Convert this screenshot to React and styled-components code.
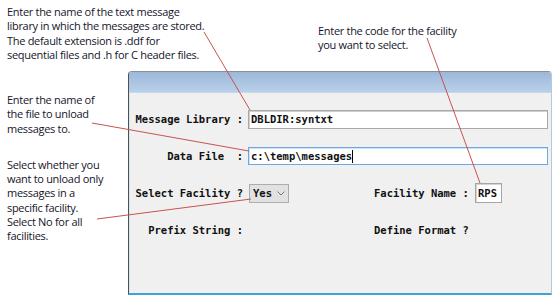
import React from 'react';
import styled, { createGlobalStyle } from 'styled-components';

const GlobalStyle = createGlobalStyle`
  html, body {
    margin: 0;
    padding: 0;
    background: #ffffff;
  }
`;

const Page = styled.div`
  position: relative;
  width: 553px;
  height: 297px;
  overflow: hidden;
  font-family: "Open Sans", "DejaVu Sans", sans-serif;
`;

const TopRow = styled.div`
  display: grid;
  grid-template-columns: 311px 1fr;
  height: 71px;
  padding-left: 7px;
  box-sizing: border-box;
`;

const MainRow = styled.div`
  display: flex;
  align-items: flex-start;
`;

const SideColumn = styled.div`
  width: 128px;
  flex-shrink: 0;
  padding-left: 7px;
  box-sizing: border-box;
  display: flex;
  flex-direction: column;
`;

const Note = styled.div`
  font-size: 11px;
  line-height: 14.3px;
  color: #15152a;
  letter-spacing: -0.3px;
  margin-top: ${p => p.$top || 0}px;
  white-space: nowrap;
`;

const Window = styled.div`
  width: 424px;
  height: 224px;
  box-sizing: border-box;
  display: flex;
  flex-direction: column;
  background: #f0f0f0;
  border-top: 1px solid #8a8f96;
  border-left: 1px solid #505050;
  border-right: 1px solid #b3c9de;
  border-bottom: 2px solid #3aa6d4;
  border-radius: 4px 4px 0 0;
  box-shadow: inset 1px 0 0 #d6e6f2;
  overflow: hidden;
`;

const TitleBar = styled.div`
  height: 20px;
  flex-shrink: 0;
  background: linear-gradient(#9cb8d9, #b9d0ea);
  border-bottom: 1px solid #c9d8e6;
`;

const Form = styled.div`
  display: grid;
  grid-template-columns: 115px 130px 101px 1fr;
  grid-auto-rows: 20px;
  row-gap: 17px;
  align-items: center;
  padding: 16px 3px 0 0;
  font-family: "DejaVu Sans Mono", "Liberation Mono", monospace;
  font-weight: bold;
  font-size: 10.5px;
  color: #111111;
`;

const Label = styled.div`
  white-space: pre;
  text-align: ${p => (p.$left ? 'left' : 'right')};
  padding-right: ${p => (p.$left ? 0 : 1)}px;
`;

const TextInput = styled.div`
  grid-column: 2 / 5;
  height: ${p => (p.$focused ? 18 : 19)}px;
  margin-left: 4px;
  box-sizing: border-box;
  background: #ffffff;
  border: 1px solid ${p => (p.$focused ? '#6fa8e0' : '#a8a8a8')};
  box-shadow: inset 1px 1px 0 ${p => (p.$focused ? '#cfe3f7' : '#d0d0d0')};
  display: flex;
  align-items: center;
  padding-left: 2px;
  white-space: pre;
`;

const Caret = styled.span`
  display: inline-block;
  width: 1px;
  height: 13px;
  background: #000000;
`;

const SelectBox = styled.div`
  width: 40px;
  height: 19px;
  margin-left: 5px;
  box-sizing: border-box;
  background: #e1e1e1;
  border: 1px solid #adadad;
  display: flex;
  align-items: center;
  gap: 5px;
  padding-left: 3px;
`;

const SmallBox = styled.div`
  width: 27px;
  height: 20px;
  box-sizing: border-box;
  background: #ffffff;
  border: 1px solid #a5a5a5;
  box-shadow: inset 1px 1px 0 #d4d4d4;
  display: flex;
  align-items: center;
  padding-left: 2px;
`;

const Leaders = styled.svg`
  position: absolute;
  left: 0;
  top: 0;
  pointer-events: none;
`;

const Chevron = () => (
  <svg width="8" height="5" viewBox="0 0 8 5">
    <polyline points="0.5,0.5 4,4 7.5,0.5" fill="none" stroke="#7a7a7a" strokeWidth="1" />
  </svg>
);

const leaderLines = [
  [204, 32, 250, 110],
  [427, 38, 480, 183],
  [92, 123, 249, 151],
  [97, 219, 251, 199],
];

export default function App() {
  return (
    <Page>
      <GlobalStyle />
      <TopRow>
        <Note $top={5}>
          Enter the name of the text message<br />
          library in which the messages are stored.<br />
          The default extension is .ddf for<br />
          sequential files and .h for C header files.
        </Note>
        <Note $top={24}>
          Enter the code for the facility<br />
          you want to select.
        </Note>
      </TopRow>
      <MainRow>
        <SideColumn>
          <Note $top={22}>
            Enter the name of<br />
            the file to unload<br />
            messages to.
          </Note>
          <Note $top={22}>
            Select whether you<br />
            want to unload only<br />
            messages in a<br />
            specific facility.<br />
            Select No for all<br />
            facilities.
          </Note>
        </SideColumn>
        <Window>
          <TitleBar />
          <Form>
            <Label>Message Library :</Label>
            <TextInput>DBLDIR:syntxt</TextInput>

            <Label>Data File  :</Label>
            <TextInput $focused>c:\temp\messages<Caret /></TextInput>

            <Label>Select Facility ?</Label>
            <SelectBox>Yes <Chevron /></SelectBox>
            <Label $left>Facility Name :</Label>
            <SmallBox>RPS</SmallBox>

            <Label>Prefix String :</Label>
            <div />
            <Label $left>Define Format ?</Label>
            <div />
          </Form>
        </Window>
      </MainRow>
      <Leaders width="553" height="297">
        {leaderLines.map(([x1, y1, x2, y2], i) => (
          <line key={i} x1={x1} y1={y1} x2={x2} y2={y2} stroke="#c9524f" strokeWidth="1" />
        ))}
      </Leaders>
    </Page>
  );
}
